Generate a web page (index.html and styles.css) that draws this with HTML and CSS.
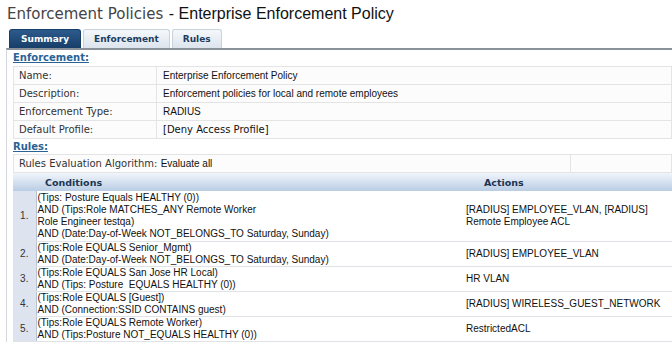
FILE: index.html
```html
<!DOCTYPE html>
<html lang="en">
<head>
    <meta charset="UTF-8">
    <title>Enforcement Policies</title>
    <link rel="stylesheet" href="styles.css">
</head>
<body>
    <h1 class="page-title"><span class="title-main">Enforcement Policies</span> <span class="title-sub">- Enterprise Enforcement Policy</span></h1>

    <div class="tabs">
        <div class="tab active">Summary</div>
        <div class="tab">Enforcement</div>
        <div class="tab">Rules</div>
    </div>

    <div class="panel">
        <a class="section-link" href="#">Enforcement:</a>
        <table class="info">
            <colgroup><col class="col-label"><col></colgroup>
            <tr><td class="label">Name:</td><td class="value">Enterprise Enforcement Policy</td></tr>
            <tr><td class="label">Description:</td><td class="value">Enforcement policies for local and remote employees</td></tr>
            <tr><td class="label">Enforcement Type:</td><td class="value">RADIUS</td></tr>
            <tr><td class="label">Default Profile:</td><td class="value mono">[Deny Access Profile]</td></tr>
        </table>

        <a class="section-link rules-link" href="#">Rules:</a>
        <table class="algo">
            <colgroup><col><col class="col-spare"></colgroup>
            <tr><td class="label">Rules Evaluation Algorithm: <span class="value">Evaluate all</span></td><td></td></tr>
        </table>

        <table class="rules">
            <colgroup><col class="col-num"><col class="col-cond"><col></colgroup>
            <thead>
                <tr>
                    <th></th>
                    <th class="cond">Conditions</th>
                    <th class="act">Actions</th>
                </tr>
            </thead>
            <tbody>
                <tr class="tall">
                    <td class="num">1.</td>
                    <td class="cond">(Tips: Posture Equals HEALTHY (0))<br>AND (Tips:Role MATCHES_ANY Remote Worker<br>Role Engineer testqa)<br>AND (Date:Day-of-Week NOT_BELONGS_TO Saturday, Sunday)</td>
                    <td class="act">[RADIUS] EMPLOYEE_VLAN, [RADIUS]<br>Remote Employee ACL</td>
                </tr>
                <tr>
                    <td class="num">2.</td>
                    <td class="cond">(Tips:Role EQUALS Senior_Mgmt)<br>AND (Date:Day-of-Week NOT_BELONGS_TO Saturday, Sunday)</td>
                    <td class="act">[RADIUS] EMPLOYEE_VLAN</td>
                </tr>
                <tr>
                    <td class="num">3.</td>
                    <td class="cond">(Tips:Role EQUALS San Jose HR Local)<br>AND (Tips: Posture&nbsp; EQUALS HEALTHY (0))</td>
                    <td class="act">HR VLAN</td>
                </tr>
                <tr>
                    <td class="num">4.</td>
                    <td class="cond">(Tips:Role EQUALS [Guest])<br>AND (Connection:SSID CONTAINS guest)</td>
                    <td class="act">[RADIUS] WIRELESS_GUEST_NETWORK</td>
                </tr>
                <tr>
                    <td class="num">5.</td>
                    <td class="cond">(Tips:Role EQUALS Remote Worker)<br>AND (Tips:Posture NOT_EQUALS HEALTHY (0))</td>
                    <td class="act">RestrictedACL</td>
                </tr>
            </tbody>
        </table>
    </div>
</body>
</html>
```

FILE: styles.css
```css
body {
    margin: 0;
    padding: 0 0 0 6px;
    background-color: #fff;
    color: #222;
    font-family: "Liberation Sans", Arial, sans-serif;
    font-size: 10px;
    overflow: hidden;
}
.page-title {
    margin: 0;
    padding: 0 0 0 1px;
    height: 29px;
    line-height: 25px;
    font-weight: normal;
    white-space: nowrap;
}
.title-main {
    font-family: "DejaVu Sans", Verdana, sans-serif;
    font-size: 15px;
    color: #444;
}
.title-sub {
    font-size: 16px;
    color: #111;
}
.tabs {
    display: flex;
    gap: 2px;
    padding-left: 3px;
    height: 19px;
}
.tab {
    padding: 0 10px;
    line-height: 19px;
    font-family: "DejaVu Sans", Verdana, sans-serif;
    font-size: 9px;
    font-weight: bold;
    color: #1d3c5e;
    background: linear-gradient(#f5f8fb, #dce4ed);
    border: 1px solid #c9d3dd;
    border-bottom: none;
    border-radius: 3px 3px 0 0;
}
.tab.active {
    padding: 0 11px;
    color: #fff;
    background: linear-gradient(#2c5b8c, #173e68);
    border-color: #173e68;
}
.panel {
    border-top: 2px solid #8b9199;
    border-left: 1px solid #d4d8dc;
    padding: 0 0 0 6px;
    height: 292px;
}
.section-link {
    display: block;
    font-family: "DejaVu Sans", Verdana, sans-serif;
    font-size: 10px;
    font-weight: bold;
    color: #2a6295;
    line-height: 16px;
}
.rules-link {
    line-height: 15px;
}
table {
    width: 100%;
    border-collapse: collapse;
    table-layout: fixed;
}
.col-label {
    width: 143px;
}
.col-spare {
    width: 101px;
}
.col-num {
    width: 23px;
}
.col-cond {
    width: 430px;
}
.info td, .algo td {
    padding: 0 5px;
    line-height: 17px;
    border: 1px solid #e4e4e4;
    background-color: #fcfcfc;
    white-space: nowrap;
    overflow: hidden;
}
.label {
    font-family: "DejaVu Sans", Verdana, sans-serif;
    font-size: 10px;
    color: #333;
}
.value {
    font-family: "Liberation Sans", Arial, sans-serif;
    font-size: 10px;
    color: #111;
}
.info .value {
    padding-left: 6px;
}
.info .value.mono {
    font-family: "DejaVu Sans", Verdana, sans-serif;
}
.rules th {
    height: 18px;
    padding: 0;
    background: linear-gradient(#f1f5fb, #b9cde5);
    font-family: "DejaVu Sans", Verdana, sans-serif;
    font-size: 9.5px;
    color: #1b3553;
    text-align: left;
}
.rules th.cond {
    padding-left: 9px;
}
.rules th.act {
    padding-left: 18px;
}
.rules td {
    padding: 0 0 0 1px;
    line-height: 12px;
    border-bottom: 1px solid #dfe3e8;
    vertical-align: middle;
    white-space: nowrap;
    overflow: hidden;
    color: #111;
}
.rules tr.tall td {
    padding-top: 1px;
    padding-bottom: 1px;
}
.rules td.num {
    padding: 0;
    text-align: center;
    background-color: #dde4ef;
    border-right: 1px solid #b9c3d0;
    color: #333;
}
.rules td.act {
    padding-left: 0;
}
```
